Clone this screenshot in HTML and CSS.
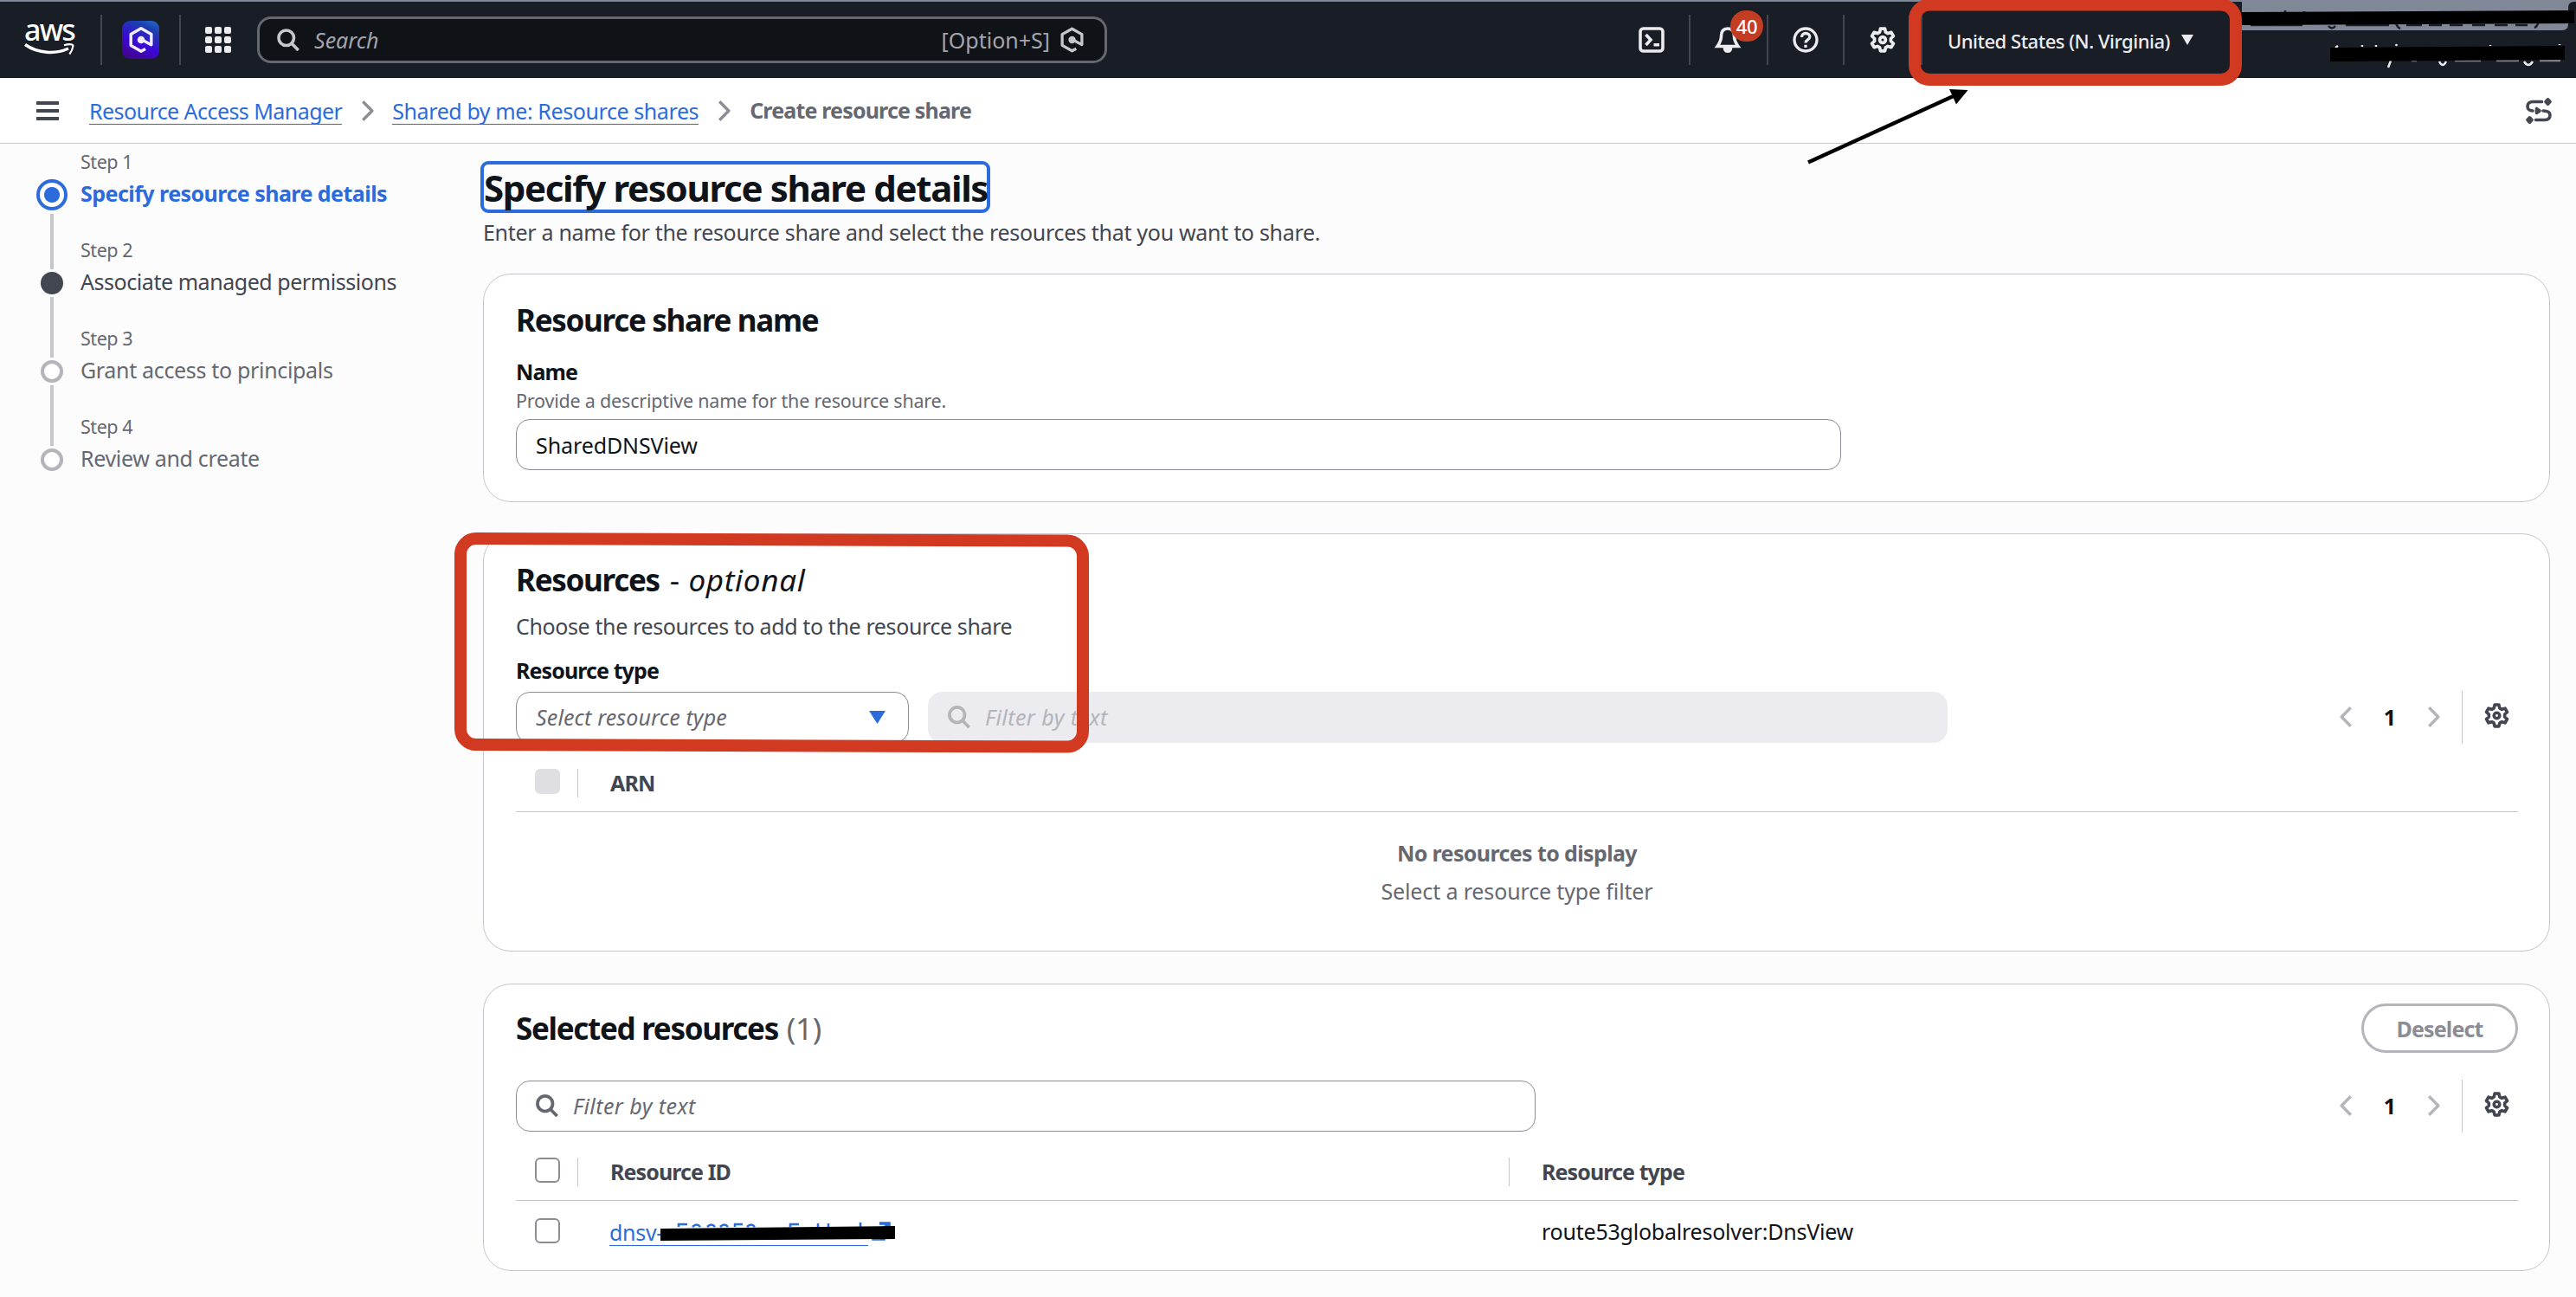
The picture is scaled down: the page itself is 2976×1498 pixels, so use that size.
FILE: index.html
```html
<!DOCTYPE html>
<html lang="en">
<head>
<meta charset="utf-8">
<title>Create resource share</title>
<link rel="stylesheet" href="styles.css">
</head>
<body>
<svg class="defs" aria-hidden="true">
  <symbol id="i-gear" viewBox="0 0 16 16"><path d="M6.17 3.24 6.66 1.13H9.34L9.83 3.24 11.21 4.04 13.28 3.41 14.62 5.72 13.04 7.2V8.8L14.62 10.28 13.28 12.59 11.21 11.96 9.83 12.76 9.34 14.87H6.66L6.17 12.76 4.79 11.96 2.72 12.59 1.38 10.28 2.96 8.8V7.2L1.38 5.72 2.72 3.41 4.79 4.04Z"/><circle cx="8" cy="8" r="1.8"/></symbol>
  <symbol id="i-search" viewBox="0 0 16 16"><circle cx="6.6" cy="6.6" r="5.4"/><path d="M10.6 10.8 15.2 15.4"/></symbol>
  <symbol id="i-left" viewBox="0 0 14 24"><path d="M12.8 1.2 2.2 12 12.8 22.8"/></symbol>
  <symbol id="i-right" viewBox="0 0 14 24"><path d="M1.2 1.2 11.8 12 1.2 22.8"/></symbol>
  <symbol id="i-q" viewBox="0 0 28 30"><path d="M19 25.6 14 28.2 2.2 21.6V8.4L14 1.8 25.8 8.4V20.8L15 15"/><circle class="fill" cx="14" cy="15" r="2.6"/></symbol>
</svg>

<header class="topbar">
  <div class="logo"><span class="logo-text">aws</span><svg class="smile" viewBox="0 0 58 14"><path d="M1 1.5C16 12 36 13 51 6" stroke-width="3.4"/><path d="M46 2.3C52 .6 57 .8 56.300 3.500 56 6.500 54.500 9.500 52.300 12.500" stroke-width="2.200"/></svg></div>
  <i class="bar-div d1"></i>
  <div class="q-tile"><svg class="q-logo"><use href="#i-q"/></svg></div>
  <i class="bar-div d2"></i>
  <div class="apps"><b></b><b></b><b></b><b></b><b></b><b></b><b></b><b></b><b></b></div>
  <div class="search"><svg class="ico s26"><use href="#i-search"/></svg><span class="search-ph">Search</span><span class="search-key">[Option+S]</span><svg class="q-small"><use href="#i-q"/></svg></div>
  <svg class="ico bar-ico shell" viewBox="0 0 30 30"><rect x="2" y="2" width="26" height="26" rx="3.5"/><path d="M8.500 9 14 15 8.500 21M17.500 20.800H24"/></svg>
  <i class="bar-div d3"></i>
  <div class="bell"><svg class="ico bar-ico" viewBox="0 0 30 30"><path d="M15 2C9.500 2 7.500 6 7.500 11 7.500 16 5.500 19 3 22.500H27C24.500 19 22.500 16 22.500 11 22.500 6 20.500 2 15 2Z"/><path d="M11.500 24.500C12 29.500 18 29.500 18.500 24.500Z" class="fill"/></svg><span class="badge">40</span></div>
  <i class="bar-div d4"></i>
  <svg class="ico bar-ico help" viewBox="0 0 30 30"><circle cx="15" cy="15" r="13"/><path d="M10.500 12C10.500 9 12.500 7.500 15 7.500 18 7.500 19.800 9.300 19.800 11.500 19.800 15 15 14.800 15 18.500"/><path d="M15 20.800V24"/></svg>
  <i class="bar-div d5"></i>
  <svg class="ico bar-ico gear"><use href="#i-gear"/></svg>
  <i class="bar-div d6"></i>
  <div class="region"><span>United States (N. Virginia)</span><svg class="tri-w" viewBox="0 0 14 12"><path d="M0 0H14L7 12Z"/></svg></div>
</header>

<nav class="crumbs">
  <div class="burger"><b></b><b></b><b></b></div>
  <a class="crumb c1">Resource Access Manager</a>
  <svg class="ico chev crumb-chev"><use href="#i-right"/></svg>
  <a class="crumb c2">Shared by me: Resource shares</a>
  <svg class="ico chev crumb-chev"><use href="#i-right"/></svg>
  <span class="crumb-now">Create resource share</span>
  <svg class="ico path-ico" viewBox="0 0 30 30"><path d="M18.500 4.500H8C4.500 4.500 2 6.500 2 10 2 13 4.500 15 8 15"/><path d="M20 15C25 15 28 16.500 28 20 28 24 25.500 25.500 22 25.500H11.500"/><path d="M12.500 12.500V17.500L16 15Z" class="fill"/><path d="M25.500 1.800 28 4.500 25.500 7.200 23 4.500ZM4.500 22.800 7 25.500 4.500 28.200 2 25.500Z"/></svg>
</nav>

<div class="page">
  <ol class="steps">
    <li class="step active"><div class="rail"><i class="dot"></i><i class="line"></i></div><div><div class="step-no">Step 1</div><div class="step-name">Specify resource share details</div></div></li>
    <li class="step visited"><div class="rail"><i class="dot"></i><i class="line"></i></div><div><div class="step-no">Step 2</div><div class="step-name">Associate managed permissions</div></div></li>
    <li class="step"><div class="rail"><i class="dot"></i><i class="line"></i></div><div><div class="step-no">Step 3</div><div class="step-name">Grant access to principals</div></div></li>
    <li class="step"><div class="rail"><i class="dot"></i></div><div><div class="step-no">Step 4</div><div class="step-name">Review and create</div></div></li>
  </ol>

  <main class="content">
    <h1 class="title">Specify resource share details</h1>
    <p class="lead">Enter a name for the resource share and select the resources that you want to share.</p>

    <section class="card card-name">
      <h2>Resource share name</h2>
      <div class="label">Name</div>
      <div class="hint">Provide a descriptive name for the resource share.</div>
      <div class="input name-input">SharedDNSView</div>
    </section>

    <section class="card card-resources">
      <h2>Resources <span class="opt">- <em>optional</em></span></h2>
      <p class="desc">Choose the resources to add to the resource share</p>
      <div class="label type-label">Resource type</div>
      <div class="filters">
        <div class="input select"><em>Select resource type</em><svg class="tri-b" viewBox="0 0 19 15"><path d="M0 0H19L9.500 15Z"/></svg></div>
        <div class="input filter disabled"><svg class="ico s26"><use href="#i-search"/></svg><em>Filter by text</em></div>
        <div class="pager"><svg class="ico chev"><use href="#i-left"/></svg><b class="page-no">1</b><svg class="ico chev"><use href="#i-right"/></svg><i class="pager-div"></i><svg class="ico pager-gear"><use href="#i-gear"/></svg></div>
      </div>
      <div class="thead"><i class="check off"></i><i class="col-div"></i><span class="th">ARN</span></div>
      <div class="empty"><b>No resources to display</b><span class="empty-hint">Select a resource type filter</span></div>
    </section>

    <section class="card card-selected">
      <div class="card-head"><h2>Selected resources <span class="count">(1)</span></h2><button class="btn">Deselect</button></div>
      <div class="filters">
        <div class="input filter"><svg class="ico s26"><use href="#i-search"/></svg><em>Filter by text</em></div>
        <div class="pager"><svg class="ico chev"><use href="#i-left"/></svg><b class="page-no">1</b><svg class="ico chev"><use href="#i-right"/></svg><i class="pager-div"></i><svg class="ico pager-gear"><use href="#i-gear"/></svg></div>
      </div>
      <div class="thead"><i class="check"></i><i class="col-div"></i><span class="th col-id">Resource ID</span><i class="col-div"></i><span class="th">Resource type</span></div>
      <div class="trow"><i class="check"></i><span class="td-id"><a class="res-link">dnsv-</a><svg class="ico ext" viewBox="0 0 22 22"><path d="M9 2H20V13M20 2 9 13M6 8H2V20H14V16"/></svg></span><span class="td">route53globalresolver:DnsView</span></div>
    </section>
  </main>
</div>

<!-- hand-drawn annotations and redactions over the page -->
<svg class="marks" viewBox="0 0 2976 1498">
  <path class="grey" d="M2590 0H2976V2H2974Q2967 2 2967 9V28Q2967 35 2960 35H2590Z"/>
  <path class="peek-dark" d="M2640 14v-2M2662 13v2M2770 13v2M2690 30q4 5 8 0M2768 27q2 5 5 6M2932 27q-1 4-4 5M2600 29h60M2710 29h50M2780 29h18M2806 29h15M2830 29h15M2856 29h15M2882 29h15M2906 29h14"/>
  <path class="peek-light" d="M2698 55l3-2M2729 54v-2M2745 54v-2M2768 53l1-2M2877 53v-1M2957 52v-1M2762 70l-3 8M2818 71q4 8 8 0M2916 71q5 8 10 0"/>
  <path class="peek-light faint" d="M2786 70h6M2836 70h30M2884 70h26M2934 70h24"/>
  <path class="ink" d="M2589 14 2974 12V27L2590 29Z"/>
  <path class="ink" d="M2692 55 2963 53V69L2692 71Z"/>
  <path class="peek-blue" d="M784 1417v-3h10M800 1417q5-5 9 0M817 1417q5-5 9 0M832 1417q5-5 9 0M849 1417v-3h9M863 1417q5-5 9 0M913 1417v-3h10M945 1417v-4M957 1417v-4M994 1417v-5"/>
  <path class="ink" d="M763 1419 1034 1416V1431L763 1433Z"/>
  <rect class="box" x="2212" y="5.500" width="371" height="86.500" rx="17"/>
  <rect class="box" x="532" y="622" width="719" height="238" rx="18" transform="translate(0 -1.800) skewY(.2)"/>
  <path class="arrow" d="M2089 187.500 2260 109.500"/>
  <path class="ink" d="M2252 103 2273.500 104 2260 120.500Z"/>
</svg>
</body>
</html>
```
FILE: styles.css
```css
* { box-sizing: border-box; }
body { margin: 0; width: 2976px; height: 1498px; overflow: hidden; position: relative; background: #fcfcfc; color: #0f141a; font: 450 25px/36px "Noto Sans", "Open Sans", sans-serif; letter-spacing: -.3px; }
h1, h2, p, ol { margin: 0; padding: 0; }
b { font-weight: 700; letter-spacing: -.62px; }
.defs { position: absolute; width: 0; height: 0; }
.ico { display: block; flex: none; fill: none; stroke: currentColor; stroke-width: 2; overflow: visible; }
.ico .fill, .fill { fill: currentColor; }
symbol path, symbol circle { stroke-linejoin: round; }
.s26 { width: 26px; height: 26px; }
.chev { width: 14px; height: 24px; stroke-width: 3.4; color: #b4b4bb; }

.topbar { height: 90px; background: #191d26; border-top: 2px solid #7d8798; border-bottom: 1px solid #101319; display: flex; align-items: center; color: #ebebf0; padding-left: 28px; }
.logo { width: 58px; color: #fff; text-align: center; }
.logo-text { display: block; font: 500 34px/24px "Noto Sans", sans-serif; letter-spacing: -1.800px; margin-top: -6px; padding-bottom: 4px; }
.smile { display: block; width: 58px; height: 14px; fill: none; stroke: #fff; }
.bar-div { width: 2px; height: 58px; background: #424650; flex: none; }
.d1 { margin-left: 30px; }
.q-tile { width: 43px; height: 44px; margin-left: 23px; border-radius: 9px; background: linear-gradient(205deg, #2a6fd0 0%, #1b3fae 22%, #3a08d8 58%, #41049a 85%, #3c0a80 100%); display: flex; align-items: center; justify-content: center; }
.q-logo { width: 28px; height: 30px; fill: none; stroke: #f3ecff; stroke-width: 3.400; color: #f3ecff; }
.d2 { margin-left: 23px; }
.apps { margin-left: 28px; width: 30px; height: 30px; display: grid; grid-template-columns: repeat(3, 8px); justify-content: space-between; align-content: space-between; }
.apps b { width: 8px; height: 8px; border-radius: 2px; background: #ebebf0; }
.search { margin-left: 30px; width: 982px; height: 54px; border: 3px solid #656871; border-radius: 16px; background: #0f1317; display: flex; align-items: center; padding: 0 24px 0 20px; color: #c6c6cd; letter-spacing: 0; }
.search .ico { stroke-width: 2.200; }
.search-ph { margin-left: 17px; font-style: italic; color: #a4a4ad; }
.search-key { margin-left: auto; color: #a4a4ad; }
.q-small { width: 27px; height: 30px; margin-left: 12px; fill: none; stroke: #c6c6cd; stroke-width: 3.400; color: #c6c6cd; }
.bar-ico { width: 30px; height: 30px; stroke-width: 3.600; }
.shell { margin-left: 614px; }
.d3 { margin-left: 28px; }
.bell { position: relative; margin-left: 28px; }
.badge { position: absolute; left: 18px; top: -19px; width: 38px; height: 36px; border-radius: 18px; background: #c33d22; color: #fff; font: 500 22px/36px "Noto Sans", sans-serif; text-align: center; }
.d4 { margin-left: 30px; }
.help { margin-left: 28px; stroke-width: 3.300; }
.d5 { margin-left: 28px; }
.gear { margin-left: 29px; stroke-width: 2; }
.d6 { margin-left: 29px; }
.region { margin-left: 29px; display: flex; align-items: center; font-size: 22px; font-weight: 500; width: 284px; justify-content: space-between; padding-top: 3px; white-space: nowrap; letter-spacing: -.48px; }
.tri-w { width: 14px; height: 12px; fill: #ebebf0; margin-bottom: 3px; }

.crumbs { height: 76px; background: #fff; border-bottom: 1px solid #c6c6cd; display: flex; align-items: center; padding: 0 28px 0 41px; }
.burger { width: 26px; height: 22px; display: flex; flex-direction: column; justify-content: space-between; margin-left: 1px; }
.burger b { height: 4px; background: #424650; }
.crumb { color: #2b6bdc; border-bottom: 1px solid #2b6bdc; height: 33px; line-height: 34px; white-space: nowrap; margin-bottom: 1px; }
.c1 { margin-left: 35px; letter-spacing: -.56px; }
.c2 { letter-spacing: -.41px; }
.crumb-chev { margin: 0 21px 0 23px; color: #8c8c94; }
.crumb-now { font-weight: 700; color: #656871; letter-spacing: -.83px; margin: 0 0 2px 1px; }
.path-ico { width: 30px; height: 30px; margin-left: auto; color: #424650; stroke-width: 3.600; stroke-linecap: round; stroke-linejoin: round; }

.page { display: grid; grid-template-columns: 558px 2388px; }
.steps { list-style: none; padding-left: 42px; }
.step { height: 102px; display: grid; grid-template-columns: 51px 1fr; color: #656871; white-space: nowrap; }
.rail { width: 36px; height: 145px; padding-top: 46px; display: flex; flex-direction: column; align-items: center; }
.dot { width: 26px; height: 26px; flex: none; border: 4px solid #b4b4bb; border-radius: 50%; background: #fff; }
.line { width: 4px; height: 70px; margin-top: 3px; background: #c6c6cd; }
.step-no { font-size: 21.500px; line-height: 42px; letter-spacing: -.45px; }
.step-name { line-height: 31px; letter-spacing: -.33px; }
.active .rail { padding-top: 41px; }
.active .dot { width: 36px; height: 36px; border-color: #2b6bdc; background: radial-gradient(circle, #2b6bdc 8.500px, #fff 9.500px); }
.active .line { height: 64px; margin-top: 4px; }
.active .step-name { color: #2b6bdc; font-weight: 700; letter-spacing: -.54px; }
.visited .dot { background: #424650; border-color: #424650; }
.visited .step-name { color: #424650; letter-spacing: -.45px; }

.content { padding-top: 20px; }
.title { width: 589px; height: 60px; margin-left: -3px; border: 4px solid #2b6bdc; border-radius: 9px; font-size: 42px; line-height: 53px; font-weight: 700; white-space: nowrap; letter-spacing: -1.330px; }
.lead { margin-top: 4px; color: #424650; }
.card { background: #fff; border: 1px solid #c6c6cd; border-radius: 32px; padding: 28px 36px 0 37px; }
.card-name { margin-top: 30px; height: 264px; }
.card-resources { margin-top: 36px; height: 483px; }
.card-selected { margin-top: 37px; height: 332px; padding-top: 22px; }
h2 { font-size: 35px; line-height: 50px; font-weight: 700; white-space: nowrap; letter-spacing: -1.300px; }
.label { margin-top: 16px; font-weight: 700; letter-spacing: -.9px; }
.hint { font-size: 21.500px; line-height: 31px; color: #656871; letter-spacing: -.2px; }
.input { height: 59px; border: 1px solid #8c8c94; border-radius: 16px; display: flex; align-items: center; padding: 0 23px 0 22px; background: #fff; white-space: nowrap; }
.name-input { margin-top: 6px; width: 1531px; letter-spacing: -.1px; }
.opt, .count { font-weight: 450; }
.opt { letter-spacing: .7px; margin-left: 4px; }
.count { color: #656871; letter-spacing: -.3px; margin-left: 2px; }
.desc { margin-top: 10px; color: #424650; letter-spacing: -.38px; }
.type-label { margin-top: 15px; }
.filters { height: 58px; display: flex; align-items: center; }
.card-resources .filters { margin-top: 7px; }
.card-selected .filters { margin-top: 32px; }
.filters em { color: #656871; letter-spacing: .14px; }
.select { width: 454px; justify-content: space-between; padding-right: 26px; }
.tri-b { width: 19px; height: 15px; fill: #2b6bdc; }
.filter { width: 1178px; color: #656871; }
.filters .filter em { margin-left: 17px; letter-spacing: .45px; }
.filter .ico { stroke-width: 2.300; }
.filters .disabled { margin-left: 22px; background: #ebebf0; border-color: #ebebf0; color: #b4b4bb; }
.filters .disabled em { color: #b4b4bb; }
.pager { margin-left: auto; height: 61px; display: flex; align-items: center; padding-right: 10px; }
.page-no { width: 15px; margin: 0 37px 0 36px; text-align: center; }
.pager-div { width: 1px; height: 61px; background: #c6c6cd; margin: 0 25px; }
.pager-gear { width: 29px; height: 29px; color: #424650; margin-bottom: 4px; }
.thead { margin-top: 14px; height: 67px; border-bottom: 1px solid #c6c6cd; display: flex; align-items: center; padding-left: 22px; font-weight: 700; color: #424650; letter-spacing: -.9px; }
.check { width: 29px; height: 29px; border: 2px solid #8c8c94; border-radius: 6px; background: #fff; margin-bottom: 3px; flex: none; }
.check.off { background: #dedee3; border-color: #dedee3; }
.col-div { width: 1px; height: 33px; background: #c6c6cd; margin-left: 20px; }
.th { margin-left: 37px; }
.empty { margin-top: 29px; display: flex; flex-direction: column; align-items: center; gap: 8px; color: #656871; }
.empty-hint { letter-spacing: -.14px; }
.card-head { height: 57px; display: flex; align-items: center; justify-content: space-between; }
.btn { width: 181px; height: 57px; border: 3px solid #b4b4bb; border-radius: 29px; background: #fff; color: #8c8c94; font: 700 25px/36px "Noto Sans", sans-serif; letter-spacing: -.85px; padding: 0; }
.col-id { width: 1018px; }
.trow { height: 70px; display: flex; align-items: center; padding-left: 22px; }
.trow .check { margin-bottom: 1px; }
.td-id { width: 1076px; margin-left: 57px; display: flex; align-items: center; }
.td { margin-left: 1px; letter-spacing: -.23px; }
.res-link { width: 299px; height: 34px; line-height: 36px; color: #2b6bdc; border-bottom: 1px solid #2b6bdc; }
.ext { width: 22px; height: 22px; margin-left: 4px; color: #2b6bdc; stroke-width: 3.600; }

.marks { position: absolute; left: 0; top: 0; width: 2976px; height: 1498px; }
.marks path { fill: none; stroke-width: 2.500; }
.marks .ink { fill: #000; }
.marks .grey { fill: #808898; }
.peek-dark { stroke: #191d26; }
.peek-light { stroke: #ebebf0; }
.faint { opacity: .5; }
.peek-blue { stroke: #2b6bdc; }
.box { fill: none; stroke: #d13921; stroke-width: 14; }
.marks .arrow { stroke: #000; stroke-width: 4.500; }
```
